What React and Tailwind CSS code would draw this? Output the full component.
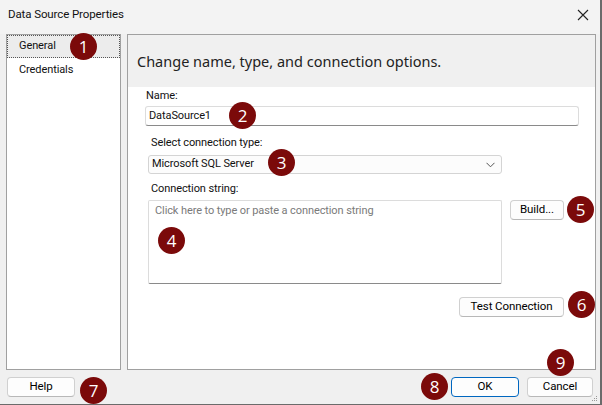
import React from 'react';

const Badge = ({ n, className }) => (
  <div
    className={`absolute w-[27px] h-[27px] rounded-full bg-[#7b0a0a] text-white flex items-center justify-center text-[17px] leading-none font-['Open_Sans',sans-serif] ${className}`}
  >
    {n}
  </div>
);

const Button = ({ children, className = '', primary = false }) => (
  <button
    className={`h-[20px] rounded-[4px] bg-[#fdfdfd] text-[11.5px] leading-none text-black ${
      primary ? 'border border-[#0067c0]' : 'border border-[#d0d0d0] border-b-[#b8b8b8]'
    } ${className}`}
  >
    {children}
  </button>
);

export default function App() {
  return (
    <div className="relative w-[602px] h-[405px] overflow-hidden bg-[#f0f0f0] border-r-2 border-b border-[#6b6b6b] font-['Roboto',sans-serif] text-[11px] tracking-[-0.1px] text-[#111] flex flex-col">
      {/* title bar */}
      <div className="h-[34px] bg-[#f3f3f3] flex items-center justify-between pl-[8px] pr-[10px] pb-[4px]">
        <span className="text-[11.5px]">Data Source Properties</span>
        <svg width="12" height="12" viewBox="0 0 12 12" className="mr-[1px]">
          <path d="M1 1 L11 11 M11 1 L1 11" stroke="#222" strokeWidth="1.1" />
        </svg>
      </div>

      {/* body */}
      <div className="flex gap-[6px] pl-[6px] h-[336px]">
        <div className="w-[115px] bg-white border border-[#a0a0a0] flex flex-col">
          <div className="h-[23px] bg-[#ececec] border border-dotted border-[#555] flex items-center pl-[11px]">
            General
          </div>
          <div className="h-[25px] flex items-center pl-[12px]">Credentials</div>
        </div>

        <div className="w-[469px] bg-white border border-[#a0a0a0] flex flex-col">
          <div className="h-[52px] bg-[#f0f0f0] flex items-center pl-[9px] pt-[2px] font-['Noto_Sans',sans-serif] tracking-normal text-[14.5px] text-[#222]">
            Change name, type, and connection options.
          </div>

          <div className="flex flex-col">
            <label className="ml-[18px] mt-[1px] h-[16px] leading-[16px]">Name:</label>
            <div className="ml-[17px] mt-[2px] w-[434px] h-[20px] border border-[#dcdcdc] border-b-[#8a8a8a] rounded-[3px] flex items-center pl-[3px]">
              DataSource1
            </div>

            <label className="ml-[23px] mt-[9px] h-[16px] leading-[16px]">Select connection type:</label>
            <div className="ml-[20px] mt-[4px] w-[354px] h-[19px] border border-[#d4d4d4] rounded-[3px] flex items-center justify-between pl-[3px] pr-[6px] bg-[#fcfcfc]">
              <span>Microsoft SQL Server</span>
              <svg width="9" height="6" viewBox="0 0 9 6">
                <path d="M0.5 0.8 L4.5 4.8 L8.5 0.8" stroke="#555" strokeWidth="1" fill="none" />
              </svg>
            </div>

            <label className="ml-[23px] mt-[7px] h-[16px] leading-[16px]">Connection string:</label>
            <div className="ml-[20px] mt-[3px] w-[416px] flex flex-col">
              <div className="flex gap-[8px] items-start">
                <div className="w-[354px] h-[84px] border border-[#dcdcdc] border-b-[#8a8a8a] rounded-[2px] pl-[6px] pt-[2px] text-[#7a7a7a]">
                  Click here to type or paste a connection string
                </div>
                <Button className="w-[54px] h-[19px]">Build...</Button>
              </div>
              <div className="flex justify-end mt-[13px]">
                <Button className="w-[105px] h-[19px]">Test Connection</Button>
              </div>
            </div>
          </div>
        </div>
      </div>

      {/* footer */}
      <div className="flex-1 flex items-start pt-[7px] pl-[7px] pr-[7px]">
        <Button className="w-[68px]">Help</Button>
        <div className="flex-1" />
        <Button primary className="w-[68px]">OK</Button>
        <Button className="w-[66px] ml-[8px]">Cancel</Button>
      </div>

      <svg width="6" height="6" viewBox="0 0 6 6" className="absolute right-[2px] bottom-[2px]">
        <rect x="4" y="0" width="1" height="1" fill="#999" />
        <rect x="2" y="2" width="1" height="1" fill="#999" />
        <rect x="4" y="2" width="1" height="1" fill="#999" />
        <rect x="0" y="4" width="1" height="1" fill="#999" />
        <rect x="2" y="4" width="1" height="1" fill="#999" />
        <rect x="4" y="4" width="1" height="1" fill="#999" />
      </svg>

      <Badge n="1" className="left-[70px] top-[33px]" />
      <Badge n="2" className="left-[229px] top-[102px]" />
      <Badge n="3" className="left-[268px] top-[149px]" />
      <Badge n="4" className="left-[158px] top-[227px]" />
      <Badge n="5" className="left-[567px] top-[196px]" />
      <Badge n="6" className="left-[568px] top-[291px]" />
      <Badge n="7" className="left-[80px] top-[377px]" />
      <Badge n="8" className="left-[421px] top-[373px]" />
      <Badge n="9" className="left-[547px] top-[349px]" />
    </div>
  );
}
